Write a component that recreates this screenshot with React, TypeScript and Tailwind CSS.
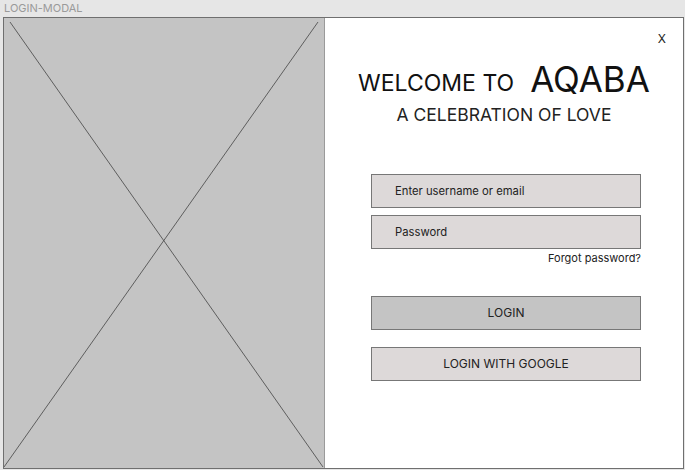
export default function App() {
  return (
    <div className="w-[685px] h-[470px] bg-[#e6e6e6] flex flex-col font-['Inter',sans-serif] overflow-hidden">
      <div className="h-[17px] pl-[4px] text-[11px] leading-[17px] text-[#9a9a9a]">LOGIN-MODAL</div>
      <div className="ml-[3px] w-[681px] h-[452px] border border-[#6f6f6f] flex bg-white">
        <div className="w-[321px] h-full bg-[#c4c4c4] border-r border-[#9a9a9a] relative">
          <svg className="absolute inset-0 w-full h-full" viewBox="0 0 320 450" preserveAspectRatio="none">
            <line x1="6" y1="4" x2="319" y2="449" stroke="#444" strokeWidth="0.8" />
            <line x1="314" y1="4" x2="0" y2="449" stroke="#444" strokeWidth="0.8" />
          </svg>
        </div>
        <div className="flex-1 flex flex-col items-center relative">
          <button className="absolute right-[17px] top-[12px] text-[12px] text-[#222]">X</button>
          <div className="mt-[42px] flex items-end gap-[16px] text-[#111]">
            <span className="text-[23px] leading-[28px] pb-[1px]">WELCOME TO</span>
            <span className="text-[35px] leading-[38px]">AQABA</span>
          </div>
          <div className="mt-[6px] text-[17.5px] leading-[22px] text-[#222]">A CELEBRATION OF LOVE</div>
          <div className="mt-[48px] ml-[4px] w-[270px] flex flex-col">
            <div className="h-[34px] bg-[#ddd9d9] border border-[#777] flex items-center pl-[23px] text-[11.25px] text-[#222]">
              Enter username or email
            </div>
            <div className="mt-[7px] h-[34px] bg-[#ddd9d9] border border-[#777] flex items-center pl-[23px] text-[11.25px] text-[#222]">
              Password
            </div>
            <div className="mt-[1px] text-right text-[11px] leading-[16px] text-[#222]">Forgot password?</div>
            <button className="mt-[30px] h-[34px] bg-[#c4c4c4] border border-[#777] text-[12px] text-[#222]">LOGIN</button>
            <button className="mt-[17px] h-[34px] bg-[#ddd9d9] border border-[#777] text-[12px] text-[#222]">LOGIN WITH GOOGLE</button>
          </div>
        </div>
      </div>
    </div>
  );
}
